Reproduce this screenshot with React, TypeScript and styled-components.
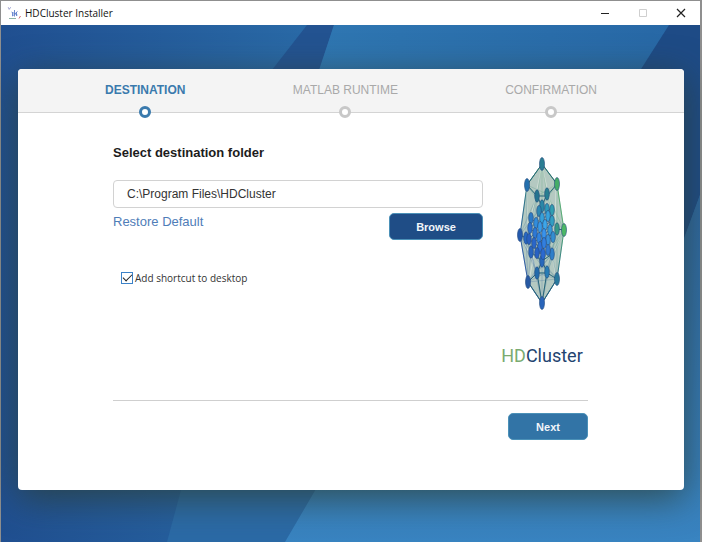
import React, { useState } from "react";
import styled, { createGlobalStyle } from "styled-components";

const GlobalStyle = createGlobalStyle`
  *, *::before, *::after { box-sizing: border-box; }
  html, body, #root { height: 100%; }
  body {
    margin: 0;
    font-family: "Liberation Sans", Arial, sans-serif;
    color: #222;
  }
`;

const Window = styled.div`
  display: flex;
  flex-direction: column;
  min-height: 100%;
  border: 1px solid #8f8f8f;
  border-right-width: 2px;
  border-bottom: 0;
  background: #25619f;
`;

const TitleBar = styled.header`
  display: flex;
  align-items: center;
  justify-content: space-between;
  height: 24px;
  padding: 0 11px 0 6px;
  background: #fff;
`;

const Title = styled.div`
  display: flex;
  align-items: center;
  gap: 3px;
  font: 10px/16px "Open Sans", "Noto Sans", sans-serif;
  color: #111;
`;

const Controls = styled.div`
  display: flex;
  gap: 22px;
`;

const ControlButton = styled.button`
  display: flex;
  align-items: center;
  justify-content: center;
  width: 16px;
  height: 16px;
  padding: 0;
  border: 0;
  background: none;
`;

const Stage = styled.div`
  position: relative;
  display: flex;
  flex: 1;
  padding: 44px 16px 52px 17px;
`;

const Backdrop = styled.svg`
  position: absolute;
  inset: 0;
  width: 100%;
  height: 100%;
`;

const Card = styled.main`
  position: relative;
  display: flex;
  flex-direction: column;
  flex: 1;
  border-radius: 4px;
  background: #fff;
  box-shadow: 0 8px 36px rgba(44, 62, 50, 0.75);
`;

const Steps = styled.ol`
  display: flex;
  justify-content: space-between;
  height: 44px;
  margin: 0;
  padding: 13px 87px 0;
  list-style: none;
  border-bottom: 1px solid #d4d4d4;
  border-radius: 4px 4px 0 0;
  background: #f4f4f4;
`;

const Step = styled.li<{ $active?: boolean }>`
  display: flex;
  flex-direction: column;
  align-items: center;
  gap: 8px;
  height: 44px;
  font-size: 12px;
  line-height: 16px;
  font-weight: ${(p) => (p.$active ? 700 : 400)};
  color: ${(p) => (p.$active ? "#3a7aad" : "#a9a9a9")};

  &::after {
    content: "";
    flex: none;
    width: 12px;
    height: 12px;
    border: 3px solid ${(p) => (p.$active ? "#3a7aad" : "#c8c8c8")};
    border-radius: 50%;
    background: #fff;
  }
`;

const Body = styled.form`
  display: flex;
  flex-direction: column;
  flex: 1;
  padding: 30px 96px 50px 95px;
`;

const Columns = styled.div`
  display: grid;
  grid-template-columns: 1fr 80px;
  gap: 25px;
  flex: 1;
`;

const Heading = styled.label`
  display: block;
  margin-bottom: 17px;
  font-size: 13px;
  line-height: 20px;
  font-weight: 700;
  color: #1c1c1c;
`;

const PathInput = styled.input`
  display: block;
  width: 100%;
  height: 28px;
  padding: 0 13px;
  border: 1px solid #d2d2d2;
  border-radius: 4px;
  background: #fff;
  font: 12px "Liberation Sans", Arial, sans-serif;
  color: #333;
`;

const PathActions = styled.div`
  display: flex;
  align-items: flex-start;
  justify-content: space-between;
  padding-top: 5px;
`;

const RestoreLink = styled.a`
  font-size: 13px;
  line-height: 18px;
  color: #4f7db8;
  text-decoration: none;
`;

const Button = styled.button<{ $tone: string; $width: number }>`
  width: ${(p) => p.$width}px;
  height: 27px;
  padding: 0;
  border: 1px solid #4b91b8;
  border-radius: 5px;
  background: ${(p) => p.$tone};
  font: 700 11px "Liberation Sans", Arial, sans-serif;
  color: #f2f6fa;
`;

const CheckRow = styled.label`
  display: inline-flex;
  align-items: center;
  gap: 2px;
  margin: 30px 0 0 8px;
  font: 10px/16px "Open Sans", "Noto Sans", sans-serif;
  color: #333;
`;

const CheckBox = styled.input`
  display: grid;
  place-items: center;
  appearance: none;
  width: 12px;
  height: 12px;
  margin: 0;
  border: 1px solid #3c82c8;
  background: #fff;

  &:checked::after {
    content: "";
    width: 5px;
    height: 9px;
    margin-top: -3px;
    border: solid #222;
    border-width: 0 1px 1px 0;
    transform: rotate(45deg);
  }
`;

const Brand = styled.div`
  display: flex;
  flex-direction: column;
  align-items: center;
  gap: 28px;
  width: 68px;
  padding-top: 13px;
`;

const Wordmark = styled.div`
  font: 18px/32px Roboto, "Liberation Sans", sans-serif;
  color: #23436f;

  span { color: #7bab70; }
`;

const Footer = styled.footer`
  display: flex;
  justify-content: flex-end;
  padding-top: 12px;
  border-top: 1px solid #cfcfcf;
`;

const AppIcon = () => (
  <svg width="15" height="15" viewBox="0 0 15 15" aria-hidden="true">
    <path d="M1.2 1.2l1 2.200 1.500-2.200" stroke="#8a8fc8" strokeWidth="0.8" fill="none" />
    <path d="M2 12.500h7" stroke="#8fb5a8" />
    <path d="M7.500 4v6.500M4.500 6l6 3M10.500 5.500l-5 4.500M5.500 7v3M9.500 6v4" stroke="#5f7fcb" strokeWidth="0.9" />
    <path d="M12 12.500l1.500-2.500" stroke="#cb6a71" />
  </svg>
);

type Node = [number, number, string];

const outer: Node[] = [
  [27, 8, "#2b7e93"],
  [12, 29, "#2470ad"],
  [42, 28, "#45ad67"],
  [5, 79, "#2459ad"],
  [49, 74, "#4cb865"],
  [13, 126, "#2859a3"],
  [42, 123, "#297a9c"],
  [27, 147, "#2a65ba"],
];

const inner: Node[] = [
  [22, 40, "#25748f"],
  [32, 38, "#287f91"],
  [27, 50, "#2b87a6"],
  [42, 73, "#369985"],
  [11, 82, "#2767c2"],
  [22, 117, "#246bab"],
  [32, 116, "#287db4"],
  [27, 105, "#2869bc"],
  [16, 96, "#2965bf"],
  [37, 98, "#2e7fc9"],
];

const core: Node[] = [
  [24, 55, "#2d87b2"], [32, 53, "#2f9aba"], [37, 54, "#319eb1"],
  [16, 62, "#2c7bc5"], [21, 67, "#328ddb"], [27, 62, "#36a0d9"],
  [33, 60, "#37a3dd"], [37, 65, "#329ec2"], [15, 72, "#2b70cf"],
  [20, 77, "#2d78d4"], [25, 71, "#399ae7"], [30, 69, "#3da6e9"],
  [35, 74, "#3599d8"], [14, 83, "#2960c0"], [24, 82, "#3083e0"],
  [29, 78, "#3993ec"], [33, 84, "#3990dc"], [38, 81, "#348ed0"],
  [19, 87, "#2a66c9"], [25, 91, "#2d70d8"], [29, 87, "#327fe0"],
  [22, 97, "#2862c3"], [28, 98, "#2b69d0"], [33, 94, "#3279d0"],
];

const DiagramLines = ({ nodes, reach }: { nodes: Node[]; reach: number }) => (
  <>
    {nodes.flatMap((a, i) =>
      nodes.slice(i + 1)
        .filter((b) => Math.hypot((a[0] - b[0]) * 2, a[1] - b[1]) < reach)
        .map((b, j) => (
          <line key={`${i}-${j}`} x1={a[0]} y1={a[1]} x2={b[0]} y2={b[1]} />
        )),
    )}
  </>
);

const Dots = ({ nodes, rx, ry }: { nodes: Node[]; rx: number; ry: number }) => (
  <>
    {nodes.map(([x, y, fill]) => (
      <ellipse key={`${x}-${y}`} cx={x} cy={y} rx={rx} ry={ry} fill={fill} />
    ))}
  </>
);

const ClusterLogo = () => (
  <svg width="54" height="156" viewBox="0 0 54 156" role="img" aria-label="HDCluster logo">
    <defs>
      <linearGradient id="edge" gradientUnits="userSpaceOnUse" x1="5" y1="90" x2="49" y2="70">
        <stop offset="0" stopColor="#315fa3" />
        <stop offset="0.5" stopColor="#2d7587" />
        <stop offset="1" stopColor="#58ab76" />
      </linearGradient>
    </defs>
    <path d="M27 8L42 28L49 74L42 123L27 147L13 126L5 79L12 29Z" fill="#b4c9c1" stroke="url(#edge)" strokeWidth="1" />
    <g stroke="#dfe8e2" strokeWidth="1" opacity="0.7">
      <path d="M27 9L16 62M27 9L37 55M12 30L12 80M41 29L40 78M6 80L23 115M48 76L32 114M14 125L20 93M41 122L36 91" />
    </g>
    <g stroke="url(#edge)" strokeWidth="0.5" opacity="0.5">
      <DiagramLines nodes={[...outer, ...inner]} reach={60} />
    </g>
    <path d="M27 8L12 29L22 40H32L42 28ZM22 40L27 50L32 38M5 79L11 82M42 73L49 74M13 126L22 117H32L42 123L27 147ZM22 117L27 105L32 116L27 147L22 117M16 96L27 105L37 98" fill="none" stroke="#276678" strokeWidth="1" />
    <g stroke="#254c7e" strokeWidth="0.6">
      <DiagramLines nodes={core} reach={16} />
      <Dots nodes={outer} rx={2.5} ry={6.5} />
      <Dots nodes={inner} rx={2.3} ry={6.2} />
      <Dots nodes={core} rx={2.3} ry={5.6} />
    </g>
  </svg>
);

const StageBackdrop = () => (
  <Backdrop viewBox="0 0 699 517" preserveAspectRatio="none" aria-hidden="true">
    <defs>
      <linearGradient id="left" gradientUnits="userSpaceOnUse" x1="0" y1="0" x2="300" y2="0">
        <stop offset="0" stopColor="#204f90" />
        <stop offset="1" stopColor="#2969a6" />
      </linearGradient>
      <linearGradient id="center" x1="0" y1="0" x2="1" y2="0">
        <stop offset="0" stopColor="#3079b4" />
        <stop offset="1" stopColor="#2767a5" />
      </linearGradient>
      <linearGradient id="lower" x1="0" y1="0" x2="0" y2="1">
        <stop offset="0" stopColor="#2d669f" />
        <stop offset="1" stopColor="#3984c1" />
      </linearGradient>
    </defs>
    <path d="M0 0H400V517H0Z" fill="url(#left)" />
    <path d="M306 0H333L260 225L150 200Z" fill="#235391" />
    <path d="M333 0H699V250H250Z" fill="url(#center)" />
    <path d="M668 0H699V170L640 330L560 170Z" fill="#1e4b86" />
    <path d="M184 450L166 517H284L325 450Z" fill="#2b6aa6" />
    <path d="M440 250H670L699 170V517H284Z" fill="url(#lower)" />
  </Backdrop>
);

export default function App() {
  const [path, setPath] = useState("C:\\Program Files\\HDCluster");
  return (
    <>
      <GlobalStyle />
      <Window>
        <TitleBar>
          <Title>
            <AppIcon />
            HDCluster Installer
          </Title>
          <Controls>
            <ControlButton type="button" aria-label="Minimize">
              <svg width="10" height="10" stroke="#222"><path d="M1 5.500h8" /></svg>
            </ControlButton>
            <ControlButton type="button" aria-label="Maximize" disabled>
              <svg width="10" height="10" fill="none" stroke="#cfcfcf"><path d="M1.500 1.500h7v7h-7z" /></svg>
            </ControlButton>
            <ControlButton type="button" aria-label="Close">
              <svg width="10" height="10" stroke="#222" strokeWidth="1.200"><path d="M1 1l8 8M9 1l-8 8" /></svg>
            </ControlButton>
          </Controls>
        </TitleBar>
        <Stage>
          <StageBackdrop />
          <Card>
            <Steps>
              <Step $active aria-current="step">DESTINATION</Step>
              <Step>MATLAB RUNTIME</Step>
              <Step>CONFIRMATION</Step>
            </Steps>
            <Body onSubmit={(e) => e.preventDefault()}>
              <Columns>
                <div>
                  <Heading htmlFor="folder">Select destination folder</Heading>
                  <PathInput id="folder" value={path} onChange={(e) => setPath(e.target.value)} />
                  <PathActions>
                    <RestoreLink href="#restore">Restore Default</RestoreLink>
                    <Button type="button" $tone="#1f4d86" $width={94}>Browse</Button>
                  </PathActions>
                  <CheckRow>
                    <CheckBox type="checkbox" defaultChecked />
                    Add shortcut to desktop
                  </CheckRow>
                </div>
                <Brand>
                  <ClusterLogo />
                  <Wordmark><span>HD</span>Cluster</Wordmark>
                </Brand>
              </Columns>
              <Footer>
                <Button type="submit" $tone="#3274a6" $width={80}>Next</Button>
              </Footer>
            </Body>
          </Card>
        </Stage>
      </Window>
    </>
  );
}
